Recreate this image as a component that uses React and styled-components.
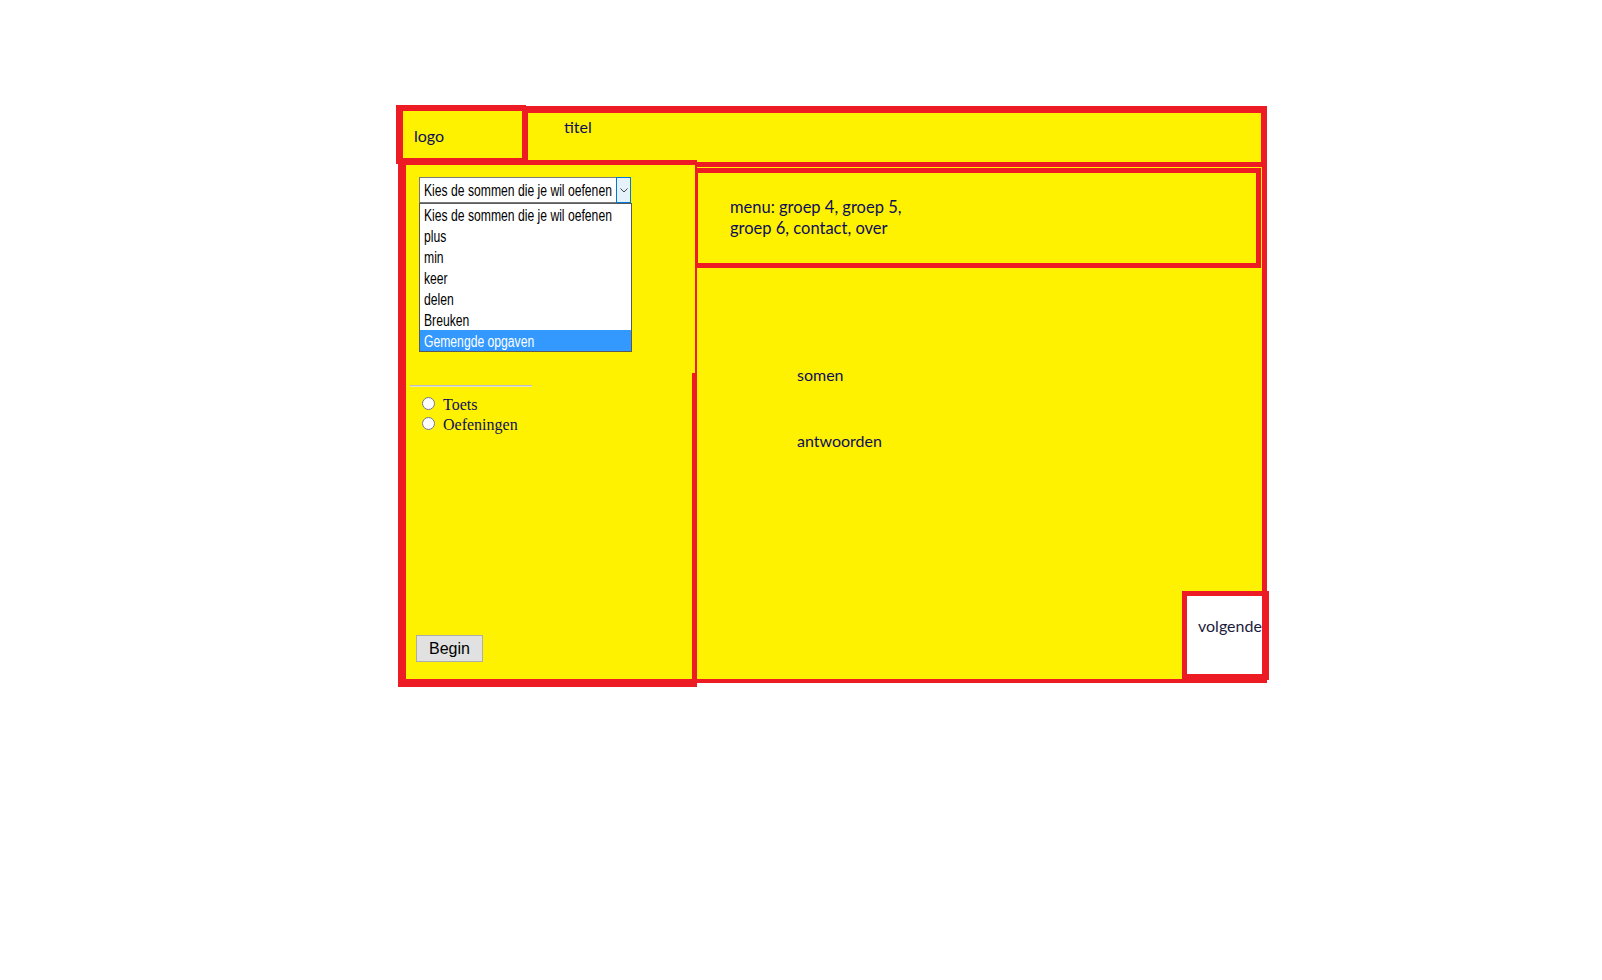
import React from "react";
import styled, { createGlobalStyle } from "styled-components";

const RED = "#ed1c24";
const YELLOW = "#fff200";
const INK = "#0e0e58";

const GlobalStyle = createGlobalStyle`
  body {
    margin: 0;
    background: #ffffff;
  }
  * {
    box-sizing: border-box;
  }
`;

const Page = styled.div`
  width: 871px;
  margin: 105px 0 0 396px;
  font-family: Lato, "Open Sans", sans-serif;
  color: ${INK};
`;

const Header = styled.div`
  display: flex;
  align-items: flex-start;
`;

const LogoBox = styled.div`
  width: 130px;
  height: 59px;
  background: ${YELLOW};
  border: 6px solid ${RED};
  border-left-width: 7px;
  border-right-width: 4px;
  padding: 15px 0 0 11px;
  position: relative;
  z-index: 1;
`;

const TitleBox = styled.div`
  flex: 1;
  height: 61px;
  margin: 1px 0 0 -3px;
  background: ${YELLOW};
  border: 7px solid ${RED};
  border-left-width: 5px;
  border-right-width: 6px;
  border-bottom-width: 5px;
  padding: 4px 0 0 36px;
`;

const BoxLabel = styled.div`
  font-size: 16px;
  line-height: 20px;
`;

const Body = styled.div`
  display: flex;
  align-items: flex-start;
  margin-top: -7px;
`;

const LeftPanel = styled.div`
  position: relative;
  width: 299px;
  height: 527px;
  margin-left: 2px;
  background: ${YELLOW};
  border: 5px solid ${RED};
  border-left-width: 8px;
  border-bottom-width: 8px;
  border-right-width: 2px;
  display: flex;
  flex-direction: column;
  align-items: flex-start;

  &::after {
    content: "";
    position: absolute;
    top: 208px;
    bottom: -8px;
    right: 0;
    width: 3px;
    background: ${RED};
  }
`;

const SelectBox = styled.div`
  display: flex;
  width: 212px;
  height: 26px;
  margin: 12px 0 0 13px;
  background: #ffffff;
  border: 1px solid #7a7a7a;
  border-right: none;
`;

const SelectValue = styled.div`
  flex: 1;
  min-width: 0;
  overflow: hidden;
  padding: 1px 0 0 4px;
  line-height: 22px;
  white-space: nowrap;
`;

const NarrowText = styled.span`
  display: inline-block;
  font-family: "Liberation Sans", Arial, sans-serif;
  font-size: 16px;
  color: ${(p) => (p.$light ? "#ffffff" : "#000000")};
  transform: scaleX(0.76);
  transform-origin: left center;
`;

const SelectArrow = styled.div`
  flex: 0 0 15px;
  margin: -1px 0;
  background: #e5f1fb;
  border: 1px solid #0078d7;
  display: flex;
  align-items: center;
  justify-content: center;
`;

const OptionList = styled.div`
  width: 213px;
  margin-left: 13px;
  background: #ffffff;
  border: 1px solid #5a5a5a;
`;

const OptionItem = styled.div`
  height: 21px;
  padding-left: 4px;
  line-height: 21px;
  white-space: nowrap;
  overflow: hidden;
  background: ${(p) => (p.$active ? "#3399ff" : "transparent")};
`;

const Divider = styled.div`
  width: 122px;
  height: 2px;
  margin: 33px 0 0 4px;
  border-top: 1px solid #bdbdbd;
  border-bottom: 1px solid #e4e4c8;
`;

const RadioGroup = styled.div`
  display: flex;
  flex-direction: column;
  margin: 8px 0 0 16px;
`;

const RadioRow = styled.label`
  display: flex;
  align-items: flex-start;
  height: 20px;
  gap: 8px;
  font-family: "Liberation Serif", serif;
  font-size: 16px;
  line-height: 20px;
  color: ${INK};
`;

const RadioInput = styled.input`
  width: 13px;
  height: 13px;
  margin: 2px 0 0 0;
`;

const BeginButton = styled.button`
  width: 67px;
  height: 27px;
  margin: auto 0 17px 10px;
  padding: 0;
  background: #e1e1e1;
  border: 1px solid #adadad;
  font-family: "Liberation Sans", Arial, sans-serif;
  font-size: 16px;
  color: #000000;
`;

const MainPanel = styled.div`
  width: 570px;
  height: 520px;
  margin-top: 3px;
  background: ${YELLOW};
  border: 4px solid ${RED};
  border-left: none;
  border-right-width: 5px;
  display: flex;
  flex-direction: column;
  align-items: flex-start;
`;

const MenuBox = styled.div`
  width: 568px;
  height: 100px;
  margin: 1px 0 0 -4px;
  border: 5px solid ${RED};
  padding: 24px 0 0 32px;
`;

const MenuText = styled.div`
  font-size: 16.5px;
  line-height: 21px;
`;

const FieldLabel = styled.div`
  margin: ${(p) => p.$top}px 0 0 100px;
  font-size: 16px;
  line-height: 20px;
`;

const NextBox = styled.div`
  align-self: flex-end;
  width: 87px;
  height: 89px;
  margin: auto -7px -1px 0;
  background: #ffffff;
  border: 5px solid ${RED};
  border-right-width: 7px;
  border-bottom-width: 6px;
  padding: 20px 0 0 11px;
  overflow: hidden;
  white-space: nowrap;
  font-size: 16px;
  line-height: 20px;
  color: #1c1c3c;
`;

const Chevron = () => (
  <svg width="8" height="5" viewBox="0 0 8 5">
    <path d="M0.5 0.5 L4 4 L7.5 0.5" fill="none" stroke="#444" strokeWidth="1" />
  </svg>
);

const options = [
  "Kies de sommen die je wil oefenen",
  "plus",
  "min",
  "keer",
  "delen",
  "Breuken",
  "Gemengde opgaven",
];

const App = () => {
  const activeIndex = options.length - 1;
  return (
    <>
      <GlobalStyle />
      <Page>
        <Header>
          <LogoBox>
            <BoxLabel>logo</BoxLabel>
          </LogoBox>
          <TitleBox>
            <BoxLabel>titel</BoxLabel>
          </TitleBox>
        </Header>
        <Body>
          <LeftPanel>
            <SelectBox>
              <SelectValue>
                <NarrowText>{options[0]}</NarrowText>
              </SelectValue>
              <SelectArrow>
                <Chevron />
              </SelectArrow>
            </SelectBox>
            <OptionList>
              {options.map((opt, i) => (
                <OptionItem key={opt} $active={i === activeIndex}>
                  <NarrowText $light={i === activeIndex}>{opt}</NarrowText>
                </OptionItem>
              ))}
            </OptionList>
            <Divider />
            <RadioGroup>
              <RadioRow>
                <RadioInput type="radio" name="mode" />
                Toets
              </RadioRow>
              <RadioRow>
                <RadioInput type="radio" name="mode" />
                Oefeningen
              </RadioRow>
            </RadioGroup>
            <BeginButton>Begin</BeginButton>
          </LeftPanel>
          <MainPanel>
            <MenuBox>
              <MenuText>
                menu: groep 4, groep 5,
                <br />
                groep 6, contact, over
              </MenuText>
            </MenuBox>
            <FieldLabel $top={97}>somen</FieldLabel>
            <FieldLabel $top={46}>antwoorden</FieldLabel>
            <NextBox>volgende</NextBox>
          </MainPanel>
        </Body>
      </Page>
    </>
  );
};

export default App;
